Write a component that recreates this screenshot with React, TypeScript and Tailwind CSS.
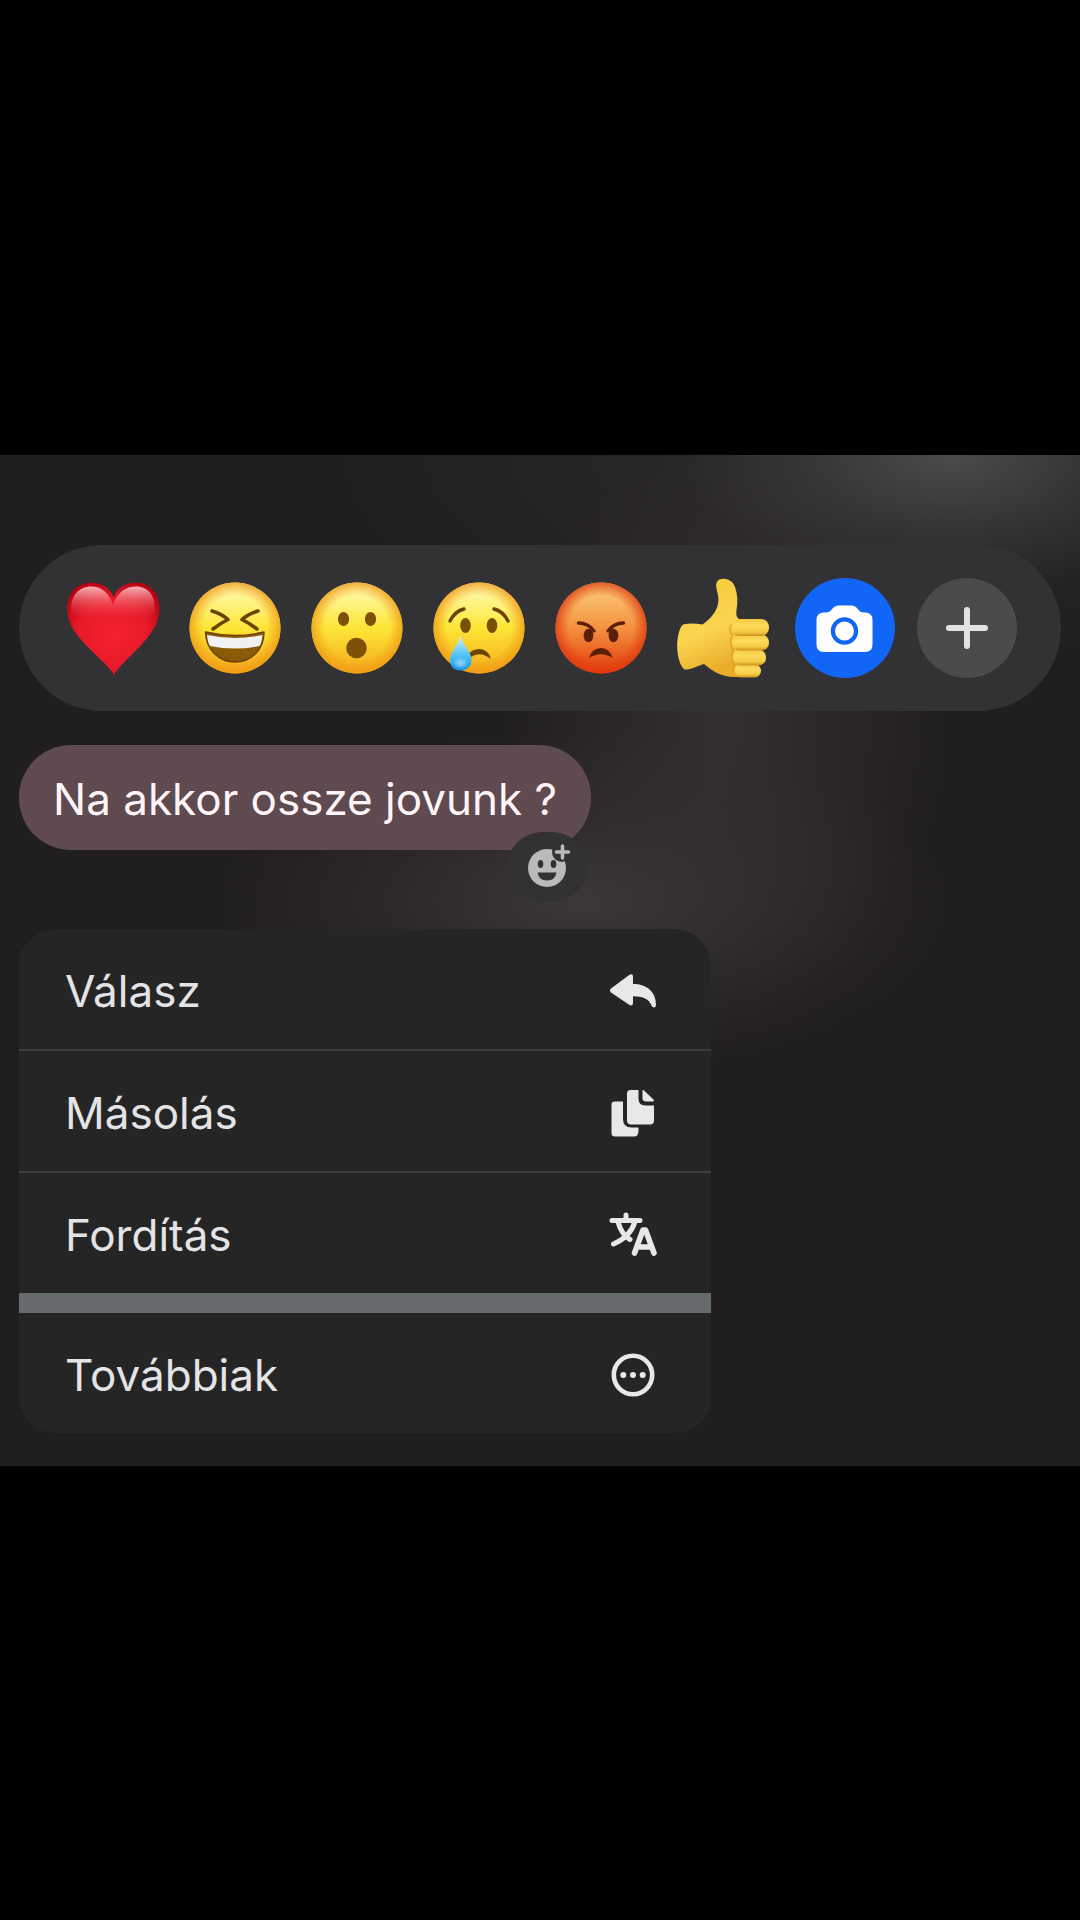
import type { ReactNode } from "react";

function FaceShade({ id, stops }: { id: string; stops: [string, string, string, string] }) {
  return (
    <defs>
      <linearGradient id={`${id}-base`} x1="0" y1="0" x2="0" y2="1">
        <stop offset="0" stopColor={stops[0]} />
        <stop offset="0.5" stopColor={stops[1]} />
        <stop offset="1" stopColor={stops[2]} />
      </linearGradient>
      <radialGradient id={`${id}-rim`} cx="0.5" cy="0.5" r="0.52">
        <stop offset="0.68" stopColor={stops[3]} stopOpacity="0" />
        <stop offset="1" stopColor={stops[3]} stopOpacity="0.9" />
      </radialGradient>
    </defs>
  );
}

function Face({ id, angry = false, children }: { id: string; angry?: boolean; children: ReactNode }) {
  return (
    <svg viewBox="0 0 100 100" className="size-full" aria-hidden="true">
      <FaceShade
        id={id}
        stops={angry ? ["#fbd27c", "#f4913f", "#e33a0a", "#e03a10"] : ["#fffcc0", "#fde636", "#f5a81c", "#ef9a14"]}
      />
      <circle cx="50" cy="50" r="45.500" fill={`url(#${id}-base)`} />
      <circle cx="50" cy="50" r="45.500" fill={`url(#${id}-rim)`} />
      {children}
    </svg>
  );
}

function Heart() {
  const shape =
    "M51 97 C46 88 33 78 21 65 C9 52 4 42 4.300 30 C4.600 14 15 4.700 28 4.700 C39 4.700 47 10 50.500 19 C54 10 62 4.700 73 4.700 C87 4.700 96.300 15 96.300 30 C96.300 43 91 53 80 65 C68 78 56 88 51 97 Z";
  return (
    <svg viewBox="0 0 100 100" className="size-full" aria-hidden="true">
      <defs>
        <radialGradient id="heart-base" cx="0.5" cy="0.55" r="0.62">
          <stop offset="0" stopColor="#f5222f" />
          <stop offset="0.6" stopColor="#e81a29" />
          <stop offset="1" stopColor="#b80012" />
        </radialGradient>
        <linearGradient id="heart-shine" gradientUnits="userSpaceOnUse" x1="0" y1="8" x2="0" y2="40">
          <stop offset="0" stopColor="#ffd9d9" stopOpacity="0.85" />
          <stop offset="0.5" stopColor="#fb8a90" stopOpacity="0.45" />
          <stop offset="1" stopColor="#f04a55" stopOpacity="0" />
        </linearGradient>
      </defs>
      <path d={shape} fill="url(#heart-base)" />
      <path
        d="M8.500 36 C6 18 16 8.500 28 8.500 C38 8.500 46 14 50 27 C54 14 63 8.500 73 8.500 C85 8.500 94 18 91.500 36 C82 49 18 49 8.500 36 Z"
        fill="url(#heart-shine)"
      />
    </svg>
  );
}

function Laugh() {
  return (
    <Face id="laugh">
      <g fill="none" stroke="#6b4403" strokeWidth="3.600" strokeLinecap="round" strokeLinejoin="round">
        <path d="M27 33 Q37 36 43 41.500 Q36 45 28 51" />
        <path d="M73 33 Q63 36 57 41.500 Q64 45 72 51" />
      </g>
      <path
        d="M20.500 54 Q50 61 79 54 C79 72 66 84 50 84 C34 84 21 72 20.500 54 Z"
        fill="#8a5a06"
        stroke="#6b4403"
        strokeWidth="1.500"
        strokeLinejoin="round"
      />
      <path d="M22 57 Q50 63 77.500 57 Q77 64 74.500 68 Q50 73 25 68 Q22.500 64 22 57 Z" fill="#f1f0f2" />
    </Face>
  );
}

function Wow() {
  return (
    <Face id="wow">
      <g fill="#7d5208">
        <ellipse cx="36.500" cy="41" rx="5.600" ry="7" />
        <ellipse cx="63.500" cy="41" rx="5.600" ry="7" />
        <circle cx="49.500" cy="70" r="10.300" />
      </g>
    </Face>
  );
}

function Cry() {
  return (
    <Face id="cry">
      <defs>
        <linearGradient id="tear" x1="0" y1="0" x2="0" y2="1">
          <stop offset="0" stopColor="#d8f6fc" />
          <stop offset="0.55" stopColor="#55c6f5" />
          <stop offset="1" stopColor="#1593e4" />
        </linearGradient>
        <radialGradient id="tear-glow">
          <stop offset="0" stopColor="#c4f0ff" stopOpacity="0.7" />
          <stop offset="1" stopColor="#c4f0ff" stopOpacity="0" />
        </radialGradient>
      </defs>
      <g fill="#7a4f08">
        <ellipse cx="36.500" cy="47.500" rx="5.300" ry="7.600" />
        <ellipse cx="63" cy="47.500" rx="5.300" ry="7.600" />
      </g>
      <g fill="none" stroke="#6b4403" strokeWidth="3.400" strokeLinecap="round">
        <path d="M21 43 Q26 33 35 31" />
        <path d="M79 43 Q74 33 65 31" />
      </g>
      <path d="M38 77 Q44 70.500 51 71 Q59.500 72 62 81 Q51 72.500 42 79 Z" fill="#6b4403" />
      <path
        d="M31.500 57 C33 67 42.500 73 42.500 82 C42.500 88.500 37.500 92.500 31.700 92.500 C25.500 92.500 21 88.500 21 82 C21 73 30 67 31.500 57 Z"
        fill="url(#tear)"
      />
      <ellipse cx="31.500" cy="85" rx="8" ry="6" fill="url(#tear-glow)" />
    </Face>
  );
}

function Angry() {
  return (
    <Face id="angry" angry>
      <g fill="#5c1f07">
        <ellipse cx="37.500" cy="57.500" rx="4.900" ry="6.700" />
        <ellipse cx="62.500" cy="57.500" rx="4.900" ry="6.700" />
        <path d="M38 80 Q41 70 50 70 Q58.500 70 61.500 80 Q50 72.500 38 80 Z" />
      </g>
      <g fill="none" stroke="#5c1f07" strokeWidth="3.400" strokeLinecap="round">
        <path d="M27.500 45 Q37 45 43 53" />
        <path d="M72.500 45 Q63 45 57 53" />
      </g>
    </Face>
  );
}

function ThumbsUp() {
  return (
    <svg viewBox="0 0 100 100" className="size-full" aria-hidden="true">
      <defs>
        <linearGradient id="thumb-hand" x1="0" y1="0" x2="0.300" y2="1">
          <stop offset="0" stopColor="#f6c936" />
          <stop offset="0.600" stopColor="#fbd550" />
          <stop offset="1" stopColor="#eaad28" />
        </linearGradient>
        <linearGradient id="thumb-finger" x1="0" y1="0" x2="0" y2="1">
          <stop offset="0" stopColor="#f6ca42" />
          <stop offset="0.400" stopColor="#fcdb5c" />
          <stop offset="0.750" stopColor="#f6cc45" />
          <stop offset="1" stopColor="#d0901c" />
        </linearGradient>
      </defs>
      <path
        d="M50 0.700 C45 0.700 43 4 43.200 8 C43.500 14 46.500 18 45 26 C43 35 37 41 29.500 46.500 C22 45 16 45 10 46.500 C6 50 4.200 60 4.200 68 C4.200 78 7 88 11.500 91.500 C18 92 24 88 31 86 C39 93 49 99 61.500 99 L78 99 L78 41 L66 41 C63.500 39 63 37 63.500 32 C65 24 64.500 16 62 9 C60 3 55 0.700 50 0.700 Z"
        fill="url(#thumb-hand)"
      />
      <g fill="url(#thumb-finger)">
        <rect x="61" y="86" width="27" height="13.500" rx="6.500" />
        <rect x="59.500" y="71.500" width="33.500" height="16" rx="7.500" />
        <rect x="59" y="56.500" width="37" height="16" rx="7.500" />
        <rect x="58" y="41" width="38" height="17" rx="8" />
      </g>
      <path d="M59 46 Q55 52 59 57 Q56 64 60 72 Q57.500 79 61 86 Q59.500 93 63 98" stroke="#d99a1f" strokeWidth="1.800" fill="none" opacity="0.600" />
    </svg>
  );
}

function Camera() {
  return (
    <svg viewBox="0 0 100 100" className="size-full" aria-hidden="true">
      <path
        d="M43 27.500 H57 Q60 27.500 62 30 L64 32.500 Q65.500 34.500 68.500 34.500 H70 Q77.500 34.500 77.500 42 V66.500 Q77.500 74 70 74 H29 Q21.500 74 21.500 66.500 V42 Q21.500 34.500 29 34.500 H31 Q34 34.500 35.800 32.500 L38 30 Q40 27.500 43 27.500 Z"
        fill="#fff"
      />
      <circle cx="49.500" cy="53" r="11.600" fill="#fff" stroke="#1266f7" strokeWidth="4.200" />
    </svg>
  );
}

function Plus() {
  return (
    <svg viewBox="0 0 100 100" className="size-full" aria-hidden="true">
      <path d="M50 32 V68 M32 50 H68" stroke="#e3e3e5" strokeWidth="6" strokeLinecap="round" />
    </svg>
  );
}

function ReplyIcon() {
  return (
    <svg viewBox="0 0 48 48" className="size-12" aria-hidden="true">
      <path
        d="M20.500 7.700 Q24 6 24 9.500 V17 C38 17 47 25 47 38 Q47 40.500 44.800 40.500 Q43.300 40.500 42.500 38.500 C40 32 34 29.300 24 29.300 V36 Q24 39.500 20.500 38 L2 25.500 Q0 23.500 2 21.500 Z"
        fill="#e8e8ea"
      />
    </svg>
  );
}

function CopyIcon() {
  return (
    <svg viewBox="0 0 48 48" className="size-12" aria-hidden="true">
      <g fill="#e8e8ea">
        <path d="M5.500 12.500 H14 V30 Q14 38.500 22.500 38.500 H29.500 V42 Q29.500 47.500 25 47.500 H6 Q2.500 47.500 2.500 44 V15.500 Q2.500 12.500 5.500 12.500 Z" />
        <path d="M21.500 1 H29.500 V9.500 Q29.500 16.500 36.500 16.500 H45 V31.500 Q45 35.500 41 35.500 H22 Q18 35.500 18 31.500 V4.500 Q18 1 21.500 1 Z" />
        <path d="M33.500 2 Q33.500 0.500 35 1.500 L44.500 10.500 Q45.500 12.500 43.500 12.500 H37 Q33.500 12.500 33.500 9 Z" />
      </g>
    </svg>
  );
}

function TranslateIcon() {
  return (
    <svg viewBox="0 0 48 48" className="size-12" aria-hidden="true">
      <g fill="none" stroke="#e8e8ea" strokeWidth="5" strokeLinecap="round" strokeLinejoin="round">
        <path d="M3 9.500 H31 M17 4 V9 M26 10.500 C23 21 16 28 4.500 33 M9 11 C11 18 15 25 21 28.500" />
        <path d="M25.500 42 L34 19 H36.500 L45 42 M29 36 H41.500" strokeWidth="5.600" />
      </g>
    </svg>
  );
}

function MoreIcon() {
  return (
    <svg viewBox="0 0 48 48" className="size-12" aria-hidden="true">
      <circle cx="24" cy="24" r="19.200" fill="none" stroke="#e8e8ea" strokeWidth="4.600" />
      <g fill="#e8e8ea">
        <circle cx="14.300" cy="24" r="3" />
        <circle cx="24" cy="24" r="3" />
        <circle cx="33.700" cy="24" r="3" />
      </g>
    </svg>
  );
}

function AddReactionIcon() {
  return (
    <svg viewBox="0 0 48 48" className="size-12" aria-hidden="true">
      <circle cx="24" cy="25" r="19" fill="#b9babb" />
      <g fill="#323234">
        <circle cx="39" cy="9" r="10" />
        <ellipse cx="17.500" cy="21" rx="2.800" ry="4" />
        <ellipse cx="30.500" cy="21" rx="2.800" ry="4" />
        <path d="M14.500 29.500 H33.500 Q32 37.500 24 37.500 Q16 37.500 14.500 29.500 Z" />
      </g>
      <path d="M39.500 3 V15 M33.500 9 H45.500" stroke="#b9babb" strokeWidth="3.600" strokeLinecap="round" />
    </svg>
  );
}

const reactions = [
  { label: "Szív", icon: <Heart /> },
  { label: "Nevetés", icon: <Laugh /> },
  { label: "Meglepett", icon: <Wow /> },
  { label: "Szomorú", icon: <Cry /> },
  { label: "Dühös", icon: <Angry /> },
  { label: "Tetszik", icon: <ThumbsUp /> },
];

const actions = [
  { label: "Válasz", icon: <ReplyIcon />, divider: "border-b-2 border-[#3d3d3e]" },
  { label: "Másolás", icon: <CopyIcon />, divider: "border-b-2 border-[#3d3d3e]" },
  { label: "Fordítás", icon: <TranslateIcon />, divider: "border-b-20 border-[#656a6d]" },
  { label: "Továbbiak", icon: <MoreIcon />, divider: "" },
];

export default function App() {
  return (
    <div className="flex min-h-screen flex-col justify-center bg-black font-[Inter,sans-serif]">
      <main className="flex flex-col items-start bg-[#211e1f] bg-[radial-gradient(ellipse_270px_140px_at_88%_0%,#4c4a4a_0%,#4240408c_50%,#211e1f00_100%),radial-gradient(ellipse_520px_210px_at_80%_0%,#3835368c_0%,#211e1f00_100%),radial-gradient(ellipse_220px_280px_at_67%_27%,#3b3738b3_0%,#3834355c_55%,#211e1f00_100%),radial-gradient(ellipse_360px_170px_at_54%_44%,#3c3839_0%,#38343573_55%,#211e1f00_100%)] px-[19px] pt-[90px] pb-[33px]">
        <div className="flex h-[166px] w-full items-center justify-between rounded-full bg-[#323234] px-11">
          {reactions.map((reaction) => (
            <button key={reaction.label} type="button" aria-label={reaction.label} className="size-[100px]">
              {reaction.icon}
            </button>
          ))}
          <button type="button" aria-label="Kamera" className="size-[100px] rounded-full bg-[#1266f7]">
            <Camera />
          </button>
          <button type="button" aria-label="Több reakció" className="size-[100px] rounded-full bg-[#4b4b4c]">
            <Plus />
          </button>
        </div>

        <div className="relative mt-[34px] rounded-[52px] bg-[#5e4a4f] px-[34px] pt-[26px] pb-[22px]">
          <p className="text-[44px] leading-[57px] text-[#fff5f8]">Na akkor ossze jovunk ?</p>
          <button
            type="button"
            aria-label="Reakció hozzáadása"
            className="absolute right-1 -bottom-[52px] flex h-[70px] w-20 items-center justify-center rounded-full bg-[#323234]"
          >
            <AddReactionIcon />
          </button>
        </div>

        <div className="mt-[79px] flex w-2/3 max-w-[692px] flex-col overflow-hidden rounded-[36px] bg-[#252526]">
          {actions.map((action) => (
            <div key={action.label} className={action.divider}>
              <button
                type="button"
                className="flex h-[120px] w-full items-center justify-between pt-1 pr-[54px] pl-[46px] text-left text-[44px] leading-[56px] text-[#e4e4e6]"
              >
                {action.label}
                {action.icon}
              </button>
            </div>
          ))}
        </div>
      </main>
    </div>
  );
}
